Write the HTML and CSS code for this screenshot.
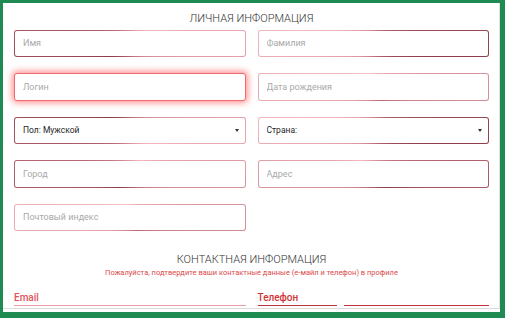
FILE: index.html
```html
<!DOCTYPE html>
<html lang="ru">
<head>
    <meta charset="UTF-8">
    <meta name="viewport" content="width=device-width, initial-scale=1.0">
    <title>Профиль</title>
    <link rel="stylesheet" href="styles.css">
</head>
<body>
    <div class="panel">
        <div class="scroll">
            <h2 class="section-title">Личная информация</h2>
            <div class="fields">
                <input class="field b-left" type="text" placeholder="Имя">
                <input class="field b-right" type="text" placeholder="Фамилия">
                <input class="field is-focused" type="text" placeholder="Логин">
                <input class="field b-soft" type="text" placeholder="Дата рождения">
                <div class="select-wrap">
                    <select class="field b-left-top">
                        <option>Пол: Мужской</option>
                    </select>
                </div>
                <div class="select-wrap">
                    <select class="field b-right">
                        <option>Страна:</option>
                    </select>
                </div>
                <input class="field b-bottom-left" type="text" placeholder="Город">
                <input class="field b-bottom-right" type="text" placeholder="Адрес">
                <input class="field b-soft" type="text" placeholder="Почтовый индекс">
            </div>

            <h2 class="section-title contact-title">Контактная информация</h2>
            <p class="notice">Пожалуйста, подтвердите ваши контактные данные (е-майл и телефон) в профиле</p>
            <div class="contacts">
                <div class="line-field email-field">Email</div>
                <div class="phone-row">
                    <div class="line-field phone-code">Телефон</div>
                    <div class="line-field phone-number"></div>
                </div>
            </div>
        </div>
    </div>
</body>
</html>
```

FILE: styles.css
```css
* {
    box-sizing: border-box;
}
html, body {
    height: 100%;
}
body {
    margin: 0;
    background-color: #1f8a52;
    font-family: Roboto, "Noto Sans", Arial, sans-serif;
    overflow: hidden;
}
.panel {
    margin: 3px 5px 0 3px;
    height: 309px;
    background: #fff;
}
.scroll {
    height: 306px;
    padding: 0 10px 0 11px;
    border-right: 1px solid #e2e2e2;
    border-bottom: 1px solid #dcdcdc;
    overflow: hidden;
}
.section-title {
    margin: 9px 0 0 0;
    font-size: 11px;
    line-height: 14px;
    font-weight: 300;
    color: #333;
    text-align: center;
    text-transform: uppercase;
}
.fields {
    display: grid;
    grid-template-columns: 1fr 1fr;
    grid-auto-rows: 27.5px;
    column-gap: 12px;
    row-gap: 16px;
    margin-top: 3.5px;
}
.field {
    width: 100%;
    height: 100%;
    margin: 0;
    padding: 0 8px;
    font-family: inherit;
    font-size: 9px;
    color: #222;
    border: 1px solid transparent;
    border-radius: 3px;
    outline: none;
    background: linear-gradient(#fff, #fff) padding-box,
        conic-gradient(from 250deg, #8c3c46, #c97c86 25%, #f3b8be 50%, #c97c86 75%, #8c3c46) border-box;
}
.field::placeholder {
    color: #a9a9a9;
}
.b-left {
    background: linear-gradient(#fff, #fff) padding-box,
        conic-gradient(from 240deg, #8c3c46, #c97c86 25%, #f3b8be 50%, #c97c86 75%, #8c3c46) border-box;
}
.b-right {
    background: linear-gradient(#fff, #fff) padding-box,
        conic-gradient(from 100deg, #8c3c46, #c97c86 25%, #f3b8be 50%, #c97c86 75%, #8c3c46) border-box;
}
.b-soft {
    background: linear-gradient(#fff, #fff) padding-box,
        conic-gradient(from 150deg, #b86672, #e4a3ab 25%, #f6c4c9 50%, #e4a3ab 75%, #b86672) border-box;
}
.b-left-top {
    background: linear-gradient(#fff, #fff) padding-box,
        conic-gradient(from 300deg, #8c3c46, #c97c86 25%, #f3b8be 50%, #c97c86 75%, #8c3c46) border-box;
}
.b-bottom-left {
    background: linear-gradient(#fff, #fff) padding-box,
        conic-gradient(from 220deg, #8c3c46, #c97c86 25%, #f3b8be 50%, #c97c86 75%, #8c3c46) border-box;
}
.b-bottom-right {
    background: linear-gradient(#fff, #fff) padding-box,
        conic-gradient(from 135deg, #8c3c46, #c97c86 25%, #f3b8be 50%, #c97c86 75%, #8c3c46) border-box;
}
.is-focused {
    background: #fff;
    border: 1px solid #f06a6f;
    box-shadow: 0 0 6px 2px rgba(255, 60, 60, 0.55);
}
.select-wrap {
    position: relative;
}
.select-wrap select {
    appearance: none;
    -webkit-appearance: none;
    font-size: 8.5px;
    color: #1e1e1e;
}
.select-wrap::after {
    content: "";
    position: absolute;
    right: 7px;
    top: 12px;
    border-left: 2.5px solid transparent;
    border-right: 2.5px solid transparent;
    border-top: 3px solid #333;
    pointer-events: none;
}
.contact-title {
    margin-top: 22px;
}
.notice {
    margin: 1px 0 0 0;
    font-size: 7.5px;
    line-height: 10px;
    color: #dc4a4a;
    text-align: center;
}
.contacts {
    display: grid;
    grid-template-columns: 1fr 1fr;
    column-gap: 12px;
    margin-top: 14px;
}
.line-field {
    height: 14px;
    font-size: 10px;
    line-height: 12px;
    font-weight: 500;
    border-bottom: 1px solid #b8323a;
}
.email-field {
    color: #e0525b;
    border-bottom-color: #eb9fa4;
}
.phone-row {
    display: flex;
    gap: 7px;
}
.phone-code {
    width: 79px;
    color: #d03434;
}
.phone-number {
    flex: 1;
    border-bottom-color: #c0353d;
}
```
